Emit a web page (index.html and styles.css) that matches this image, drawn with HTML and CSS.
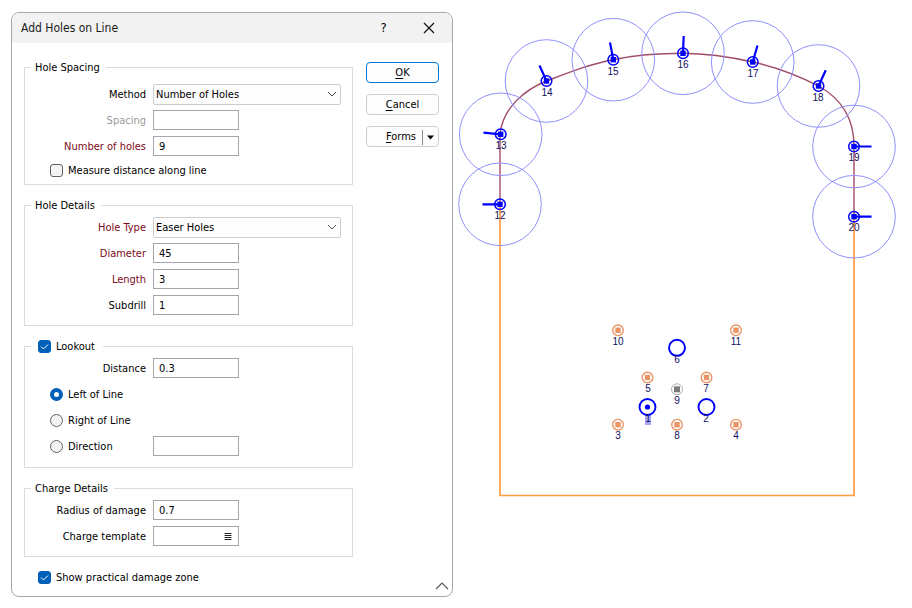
FILE: index.html
```html
<!DOCTYPE html>
<html lang="en">
<head>
<meta charset="utf-8">
<title>Add Holes on Line</title>
<link rel="stylesheet" href="styles.css">
</head>
<body>
<main class="workspace">
  <form class="dialog">
    <header class="titlebar">
      <h1 class="title">Add Holes on Line</h1>
      <button class="caption-button help" type="button" aria-label="Help">?</button>
      <button class="caption-button" type="button" aria-label="Close">
        <svg width="12" height="12" viewBox="0 0 12 12"><path d="M1 1 L11 11 M11 1 L1 11" fill="none" stroke="#111" stroke-width="1.2"/></svg>
      </button>
    </header>

    <div class="dialog-body">
      <div class="sections">
        <fieldset class="group group-spacing">
          <legend>Hole Spacing</legend>
          <div class="row">
            <label class="name" for="method">Method</label>
            <select id="method"><option>Number of Holes</option></select>
          </div>
          <div class="row">
            <label class="name disabled" for="spacing">Spacing</label>
            <input class="field" id="spacing" type="text">
          </div>
          <div class="row">
            <label class="name required" for="count">Number of holes</label>
            <input class="field" id="count" type="text" value="9">
          </div>
          <div class="choice tight">
            <input id="measure" type="checkbox"><label for="measure">Measure distance along line</label>
          </div>
        </fieldset>

        <fieldset class="group">
          <legend>Hole Details</legend>
          <div class="row">
            <label class="name required" for="type">Hole Type</label>
            <select id="type"><option>Easer Holes</option></select>
          </div>
          <div class="row">
            <label class="name required" for="diameter">Diameter</label>
            <input class="field" id="diameter" type="text" value="45">
          </div>
          <div class="row">
            <label class="name required" for="length">Length</label>
            <input class="field" id="length" type="text" value="3">
          </div>
          <div class="row">
            <label class="name" for="subdrill">Subdrill</label>
            <input class="field" id="subdrill" type="text" value="1">
          </div>
        </fieldset>

        <fieldset class="group group-lookout">
          <legend class="check-legend"><span class="check"><input id="lookout" type="checkbox" checked><label for="lookout">Lookout</label></span></legend>
          <div class="row">
            <label class="name" for="distance">Distance</label>
            <input class="field" id="distance" type="text" value="0.3">
          </div>
          <div class="choice">
            <input id="left" type="radio" name="side" checked><label for="left">Left of Line</label>
          </div>
          <div class="choice">
            <input id="right" type="radio" name="side"><label for="right">Right of Line</label>
          </div>
          <div class="row">
            <div class="choice">
              <input id="direction" type="radio" name="side"><label for="direction">Direction</label>
            </div>
            <input class="field" type="text" aria-label="Direction value">
          </div>
        </fieldset>

        <fieldset class="group">
          <legend>Charge Details</legend>
          <div class="row">
            <label class="name" for="radius">Radius of damage</label>
            <input class="field" id="radius" type="text" value="0.7">
          </div>
          <div class="row">
            <label class="name" for="template">Charge template</label>
            <span class="field picker">
              <input id="template" type="text">
              <button type="button" aria-label="Choose template">
                <svg width="8" height="8" viewBox="0 0 8 8"><path d="M.5 .5H7.500M.5 2.500H7.500M.5 4.500H7.500M.5 6.500H7.500" stroke="#222" fill="none"/></svg>
              </button>
            </span>
          </div>
        </fieldset>

        <div class="check footer-check">
          <input id="zone" type="checkbox" checked><label for="zone">Show practical damage zone</label>
        </div>
      </div>

      <div class="side">
        <div class="actions">
          <button class="action primary" type="button"><span><u>O</u>K</span></button>
          <button class="action" type="button"><span><u>C</u>ancel</span></button>
          <button class="action forms" type="button"><span><u>F</u>orms</span>
            <svg width="12" height="15" viewBox="0 0 12 15"><path d="M.5 0V15" stroke="#8a8a8a"/><path d="M5 5.500H12L8.500 9.500Z" fill="#000"/></svg>
          </button>
        </div>
        <button class="collapse" type="button" aria-label="Collapse">
          <svg width="14" height="8" viewBox="0 0 14 8"><path d="M1 7 L7 1 L13 7" fill="none" stroke="#555" stroke-width="1.100"/></svg>
        </button>
      </div>
    </div>
  </form>

  <svg class="plan" viewBox="453 0 459 608" role="img" aria-label="Drill hole plan">
    <defs>
      <g id="ring"><circle class="blue" r="5.300" stroke-width="1.500"/><rect x="-2.700" y="-2.700" width="5.400" height="5.400" fill="#00f"/></g>
      <g id="small"><circle r="5.300" fill="none" stroke="#eb9566" stroke-width="1.400"/><rect x="-2.700" y="-2.700" width="5.400" height="5.400" fill="#eb9566"/></g>
      <circle id="zone-circle" r="41.300"/>
    </defs>

    <path class="outline" d="M500 204V495.500H854V216"/>
    <path class="selected-line" d="M500 204V134C503 108 524 90 546.500 81C570 72 590 64 613 59.700C636 55 660 53.300 683 53.300C706 53.500 730 57 752.700 62C776 67 799 76 818.500 86C840 98 854 118 854 146V216"/>

    <g class="zones">
      <use href="#zone-circle" x="500" y="204.300"/><use href="#zone-circle" x="500.700" y="134.300"/>
      <use href="#zone-circle" x="546.500" y="81"/><use href="#zone-circle" x="613.300" y="59.700"/>
      <use href="#zone-circle" x="683" y="53.300"/><use href="#zone-circle" x="752.700" y="62"/>
      <use href="#zone-circle" x="818.500" y="86"/><use href="#zone-circle" x="854" y="146.500"/>
      <use href="#zone-circle" x="854" y="216.700"/>
    </g>

    <path class="direction" d="M500 204.300H482.500M500.700 134.300L483.500 132.700M546.500 81L539.500 65.500M613.300 59.700L610 42.500M683 53.300L683.700 36M752.700 62L757.500 45.500M818.500 86L825.700 70.200M854 146.500H871.500M854 216.700H871.500"/>

    <use href="#ring" x="500" y="204.300"/><use href="#ring" x="500.700" y="134.300"/>
    <use href="#ring" x="546.500" y="81"/><use href="#ring" x="613.300" y="59.700"/>
    <use href="#ring" x="683" y="53.300"/><use href="#ring" x="752.700" y="62"/>
    <use href="#ring" x="818.500" y="86"/><use href="#ring" x="854" y="146.500"/>
    <use href="#ring" x="854" y="216.700"/>

    <use href="#small" x="618" y="330.300"/><use href="#small" x="736" y="330.300"/>
    <use href="#small" x="647.500" y="377.500"/><use href="#small" x="706.500" y="377.500"/>
    <use href="#small" x="618" y="424.700"/><use href="#small" x="677" y="424.700"/>
    <use href="#small" x="736" y="424.700"/>
    <circle cx="677" cy="389.300" r="5.500" fill="none" stroke="#aaa"/>
    <rect x="674" y="386.300" width="6" height="6" fill="#7b7b7b"/>

    <rect x="645" y="415" width="6" height="10" fill="#a6a6f0"/>
    <g class="blue" stroke-width="1.900">
      <circle cx="677" cy="347.800" r="8"/><circle cx="647.500" cy="407" r="8"/><circle cx="706.500" cy="407" r="8"/>
    </g>
    <circle cx="647.500" cy="407" r="2.600" fill="#00f"/>

    <g class="numbers">
      <text x="500" y="219">12</text><text x="501" y="149">13</text><text x="547" y="96">14</text>
      <text x="613" y="75">15</text><text x="683" y="68">16</text><text x="753" y="77">17</text>
      <text x="818" y="101">18</text><text x="854" y="161">19</text><text x="854" y="231">20</text>
      <text x="618" y="345">10</text><text x="736" y="345">11</text><text x="677" y="363">6</text>
      <text x="648" y="392">5</text><text x="706" y="392">7</text><text x="677" y="404">9</text>
      <text x="648" y="422">1</text><text x="706" y="422">2</text><text x="618" y="439">3</text>
      <text x="677" y="439">8</text><text x="736" y="439">4</text>
    </g>
  </svg>
</main>
</body>
</html>
```
FILE: styles.css
```css
* { box-sizing: border-box; }

body {
  margin: 0;
  background: #fff;
  color: #000;
  font: 11px/16px "DejaVu Sans Condensed", "DejaVu Sans", sans-serif;
}

button, input, select { margin: 0; font: inherit; color: inherit; }
button { padding: 0; border: 0; background: none; }
svg { display: block; }

.workspace { display: flex; align-items: flex-start; padding-left: 11px; }

.dialog {
  flex: 0 0 auto;
  width: 442px;
  margin-top: 12px;
  border: 1px solid #a8a8a8;
  border-radius: 8px;
  background: #fff;
  overflow: hidden;
}

.titlebar {
  display: flex;
  align-items: center;
  height: 30px;
  padding: 0 1px 0 9px;
  background: #f2f2f2;
}
.title { flex: 1; margin: 0; font-size: 12px; font-weight: normal; color: #1a1a1a; }
.caption-button { display: grid; place-items: center; width: 45px; height: 30px; }
.help { font-size: 13px; }

.dialog-body { display: flex; padding: 16px 0 0 12px; }
.sections { flex: 1; display: grid; gap: 12px; padding-bottom: 11px; }

.group { min-width: 0; margin: 0; padding: 1px 11px 7px 0; border: 1px solid #dcdcdc; }
.group-spacing { padding: 6px 11px 3px 0; }
.group-lookout { padding-bottom: 8px; }
legend { margin-left: 6px; padding: 2px 6px 0 4px; line-height: 14px; }
.check-legend { padding: 0 8px 0 7px; }

.row { display: grid; grid-template-columns: 121px 1fr; column-gap: 7px; align-items: center; height: 26px; }
label { padding-top: 2px; line-height: 14px; white-space: nowrap; }
.name { text-align: right; }
.required { color: #7d0a18; }
.disabled { color: #9a9a9a; }

.field { width: 86px; height: 20px; padding: 0 5px; border: 1px solid #a5a5ab; border-radius: 0; background: #fff; outline: 0; }
.picker { display: flex; align-items: center; padding: 2px 6px 0 5px; }
.picker input { flex: 1; min-width: 0; height: 16px; padding: 0; border: 0; outline: 0; }

select {
  appearance: none;
  width: 100%;
  height: 21px;
  padding: 2px 20px 0 2px;
  border: 1px solid #ccc;
  border-radius: 2px;
  background: #fdfdfd url("data:image/svg+xml,%3Csvg xmlns='http://www.w3.org/2000/svg' width='10' height='6'%3E%3Cpath d='M1 1L5 5L9 1' fill='none' stroke='%23555'/%3E%3C/svg%3E") no-repeat right 3px center;
}

.check, .choice { display: flex; align-items: center; gap: 5px; }
.choice { height: 26px; padding-left: 25px; }
.tight { height: 22px; }
.footer-check { height: 16px; padding-left: 14px; }

input[type="checkbox"], input[type="radio"] {
  appearance: none;
  flex: none;
  width: 13px;
  height: 13px;
  border: 1px solid #626262;
  border-radius: 3px;
  background: #f3f3f3;
}
input[type="radio"] { border-radius: 50%; }
input[type="checkbox"]:checked {
  border-color: #005fb8;
  background: #005fb8 url("data:image/svg+xml,%3Csvg xmlns='http://www.w3.org/2000/svg' width='9' height='7'%3E%3Cpath d='M1 3.500L3.500 6L8 1.500' fill='none' stroke='%23fff'/%3E%3C/svg%3E") no-repeat center;
}
input[type="radio"]:checked { border: 4px solid #005fb8; background: #fff; }

.side { width: 99px; display: flex; flex-direction: column; justify-content: space-between; padding: 3px 0 6px 13px; }
.actions { display: grid; gap: 11px; padding-right: 13px; }
.action {
  height: 21px;
  padding-top: 1px;
  border: 1px solid #cfcfcf;
  border-radius: 4px;
  background: #fdfdfd;
}
.action u { text-underline-offset: 2px; }
.primary { border-color: #0078d4; }
.forms { display: flex; align-items: center; justify-content: flex-end; gap: 6px; padding-right: 4px; }
.collapse { align-self: flex-end; margin-right: 3px; }

.plan { flex: 1; min-width: 0; height: auto; }
.outline { fill: none; stroke: #ff9c40; stroke-width: 1.7; }
.selected-line { fill: none; stroke: #a04c68; stroke-width: 1.4; }
.zones { fill: none; stroke: #9090ff; stroke-width: 1; }
.direction { fill: none; stroke: #00f; stroke-width: 2.2; }
.blue { fill: none; stroke: #00f; }
.numbers { font: 10px "Liberation Sans", sans-serif; fill: #101060; text-anchor: middle; }
```
